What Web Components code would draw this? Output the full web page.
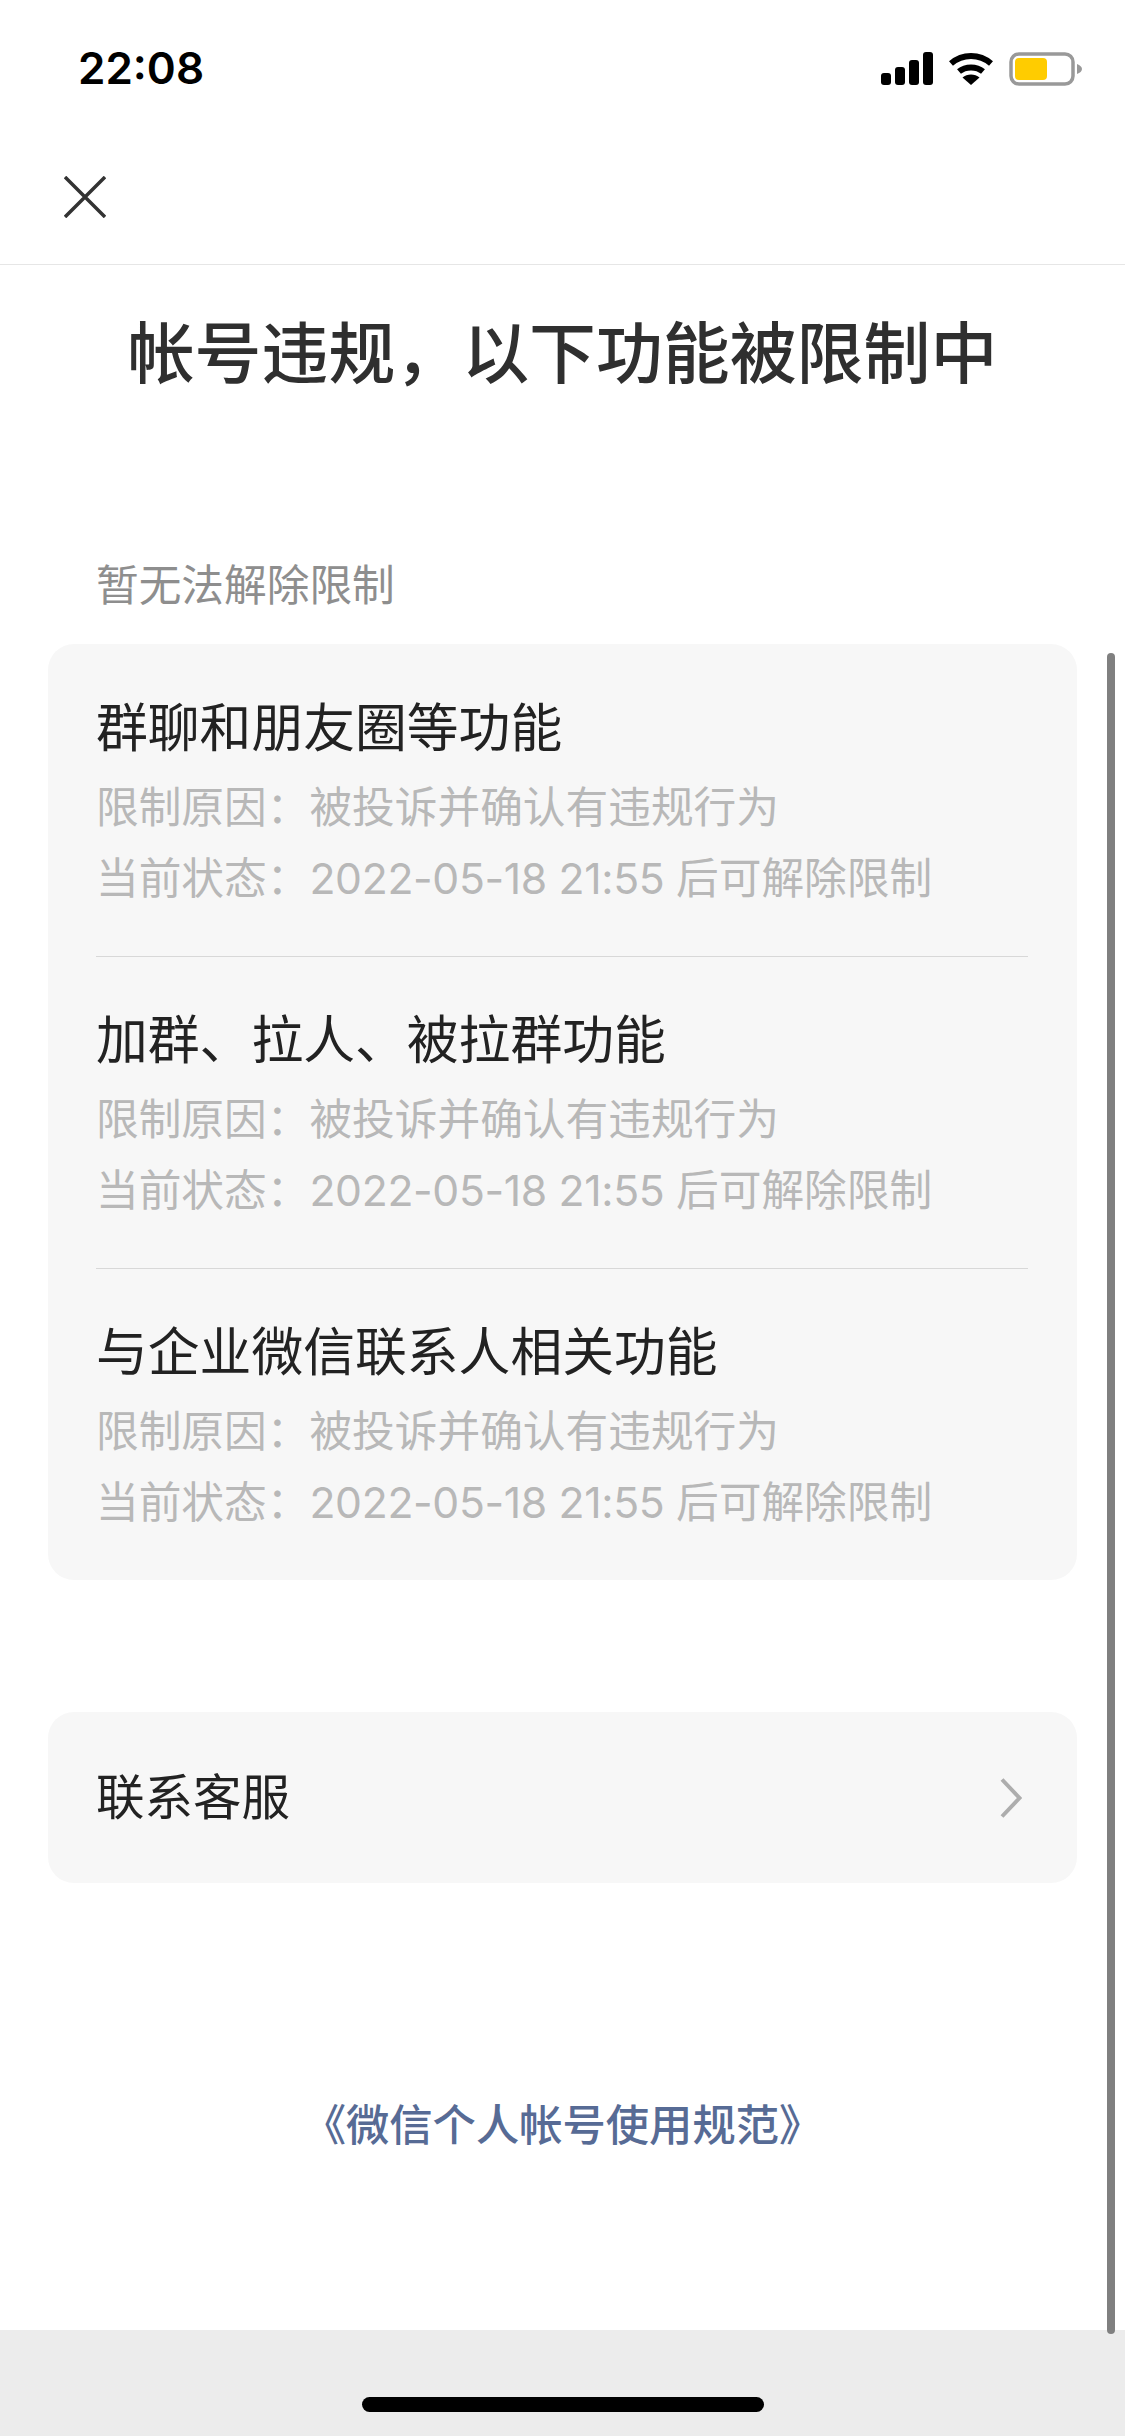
<!DOCTYPE html>
<html lang="zh-CN">
<head>
<meta charset="utf-8">
<title>帐号违规</title>
<style>
  html, body { margin: 0; padding: 0; background: #fff; }
  body {
    width: 1125px;
    height: 2436px;
    display: flex;
    flex-direction: column;
    position: relative;
    overflow: hidden;
    font-family: "Inter", "Noto Sans CJK SC", sans-serif;
  }
</style>
</head>
<body>
  <status-bar time="22:08"></status-bar>
  <nav-bar></nav-bar>
  <page-title>帐号违规，以下功能被限制中</page-title>
  <section-label>暂无法解除限制</section-label>
  <limit-card>
    <limit-item name="群聊和朋友圈等功能"></limit-item>
    <limit-item name="加群、拉人、被拉群功能"></limit-item>
    <limit-item name="与企业微信联系人相关功能" last></limit-item>
  </limit-card>
  <contact-row>联系客服</contact-row>
  <rule-link>《微信个人帐号使用规范》</rule-link>
  <home-bar></home-bar>
  <scroll-thumb></scroll-thumb>

<script>
class StatusBar extends HTMLElement {
  connectedCallback() {
    this.attachShadow({ mode: "open" });
    this.shadowRoot.innerHTML = `
      <style>
        :host {
          display: flex;
          justify-content: space-between;
          align-items: flex-start;
          height: 132px;
          padding: 46px 43px 0 78px;
          box-sizing: border-box;
        }
        .time {
          font: 600 44px/44px "Inter", sans-serif;
          color: #000;
        }
        .icons { display: flex; align-items: flex-start; gap: 15px; padding-top: 6px; }
        svg { display: block; }
      </style>
      <span class="time">${this.getAttribute("time")}</span>
      <div class="icons">
        <svg width="52" height="33" viewBox="0 0 52 33">
          <rect x="0" y="21" width="10" height="12" rx="3" fill="#000"/>
          <rect x="14" y="15" width="10" height="18" rx="3" fill="#000"/>
          <rect x="28" y="8" width="10" height="25" rx="3" fill="#000"/>
          <rect x="42" y="0" width="10" height="33" rx="3" fill="#000"/>
        </svg>
        <svg width="46" height="33" viewBox="0 0 46 33">
          <path d="M3 11.5C14.500 1.500 31.500 1.500 43 11.500" fill="none" stroke="#000" stroke-width="6"/>
          <path d="M11 19.500C17.500 14 28.500 14 35 19.500" fill="none" stroke="#000" stroke-width="6"/>
          <path d="M23 33L14.500 25.500C19 21.500 27 21.500 31.500 25.500Z" fill="#000"/>
        </svg>
        <svg width="73" height="34" viewBox="0 0 73 34">
          <rect x="2" y="2" width="62" height="30" rx="8" fill="none" stroke="#999" stroke-width="3.500"/>
          <rect x="6" y="6" width="32" height="22" rx="4" fill="#ffcc00"/>
          <path d="M68 12C71 13 73 15 73 17C73 19 71 21 68 22Z" fill="#999"/>
        </svg>
      </div>
    `;
  }
}
customElements.define("status-bar", StatusBar);

class NavBar extends HTMLElement {
  connectedCallback() {
    this.attachShadow({ mode: "open" });
    this.shadowRoot.innerHTML = `
      <style>
        :host {
          display: flex;
          align-items: flex-start;
          height: 133px;
          padding: 44px 0 0 64px;
          box-sizing: border-box;
          border-bottom: 1px solid #e6e6e6;
        }
        svg { display: block; }
      </style>
      <svg width="42" height="42" viewBox="0 0 42 42">
        <path d="M1 1L41 41M41 1L1 41" fill="none" stroke="#333" stroke-width="3.500"/>
      </svg>
    `;
  }
}
customElements.define("nav-bar", NavBar);

class PageTitle extends HTMLElement {
  connectedCallback() {
    this.attachShadow({ mode: "open" });
    this.shadowRoot.innerHTML = `
      <style>
        :host {
          display: block;
          padding-top: 39px;
          text-align: center;
          font: 500 66.900px/90px "Noto Sans CJK SC", sans-serif;
          color: #2f2f2f;
        }
      </style>
      <slot></slot>
    `;
  }
}
customElements.define("page-title", PageTitle);

class SectionLabel extends HTMLElement {
  connectedCallback() {
    this.attachShadow({ mode: "open" });
    this.shadowRoot.innerHTML = `
      <style>
        :host {
          display: block;
          margin: 158px 0 32px;
          padding-left: 96px;
          font: 400 42.7px/60px "Noto Sans CJK SC", sans-serif;
          color: #8e8e8e;
        }
      </style>
      <slot></slot>
    `;
  }
}
customElements.define("section-label", SectionLabel);

class LimitCard extends HTMLElement {
  connectedCallback() {
    this.attachShadow({ mode: "open" });
    this.shadowRoot.innerHTML = `
      <style>
        :host {
          display: block;
          margin: 0 48px;
          padding: 1px 49px 0 48px;
          background: #f7f7f7;
          border-radius: 26px;
        }
      </style>
      <slot></slot>
    `;
  }
}
customElements.define("limit-card", LimitCard);

class LimitItem extends HTMLElement {
  connectedCallback() {
    this.attachShadow({ mode: "open" });
    this.shadowRoot.innerHTML = `
      <style>
        :host {
          display: block;
          height: 312px;
          padding: 44px 0 0;
          box-sizing: border-box;
          border-bottom: 1px solid #d8d8d8;
        }
        :host([last]) { height: 311px; border-bottom: 0; }
        .name {
          font: 400 51.800px/72px "Noto Sans CJK SC", sans-serif;
          color: #222;
          margin-bottom: 11px;
        }
        .line {
          font: 400 42.7px/71px "Inter", "Noto Sans CJK SC", sans-serif;
          color: #b8b8b8;
        }
        .num { letter-spacing: -0.35px; }
      </style>
      <div class="name">${this.getAttribute("name")}</div>
      <div class="line">限制原因：被投诉并确认有违规行为</div>
      <div class="line">当前状态：<span class="num">2022-05-18 21:55 </span>后可解除限制</div>
    `;
  }
}
customElements.define("limit-item", LimitItem);

class ContactRow extends HTMLElement {
  connectedCallback() {
    this.attachShadow({ mode: "open" });
    this.shadowRoot.innerHTML = `
      <style>
        :host {
          display: flex;
          justify-content: space-between;
          align-items: center;
          height: 171px;
          margin: 132px 48px 0;
          padding: 0 55px 0 48px;
          box-sizing: border-box;
          background: #f7f7f7;
          border-radius: 26px;
          font: 400 48.500px/60px "Noto Sans CJK SC", sans-serif;
          color: #222;
        }
        .text { position: relative; top: -4px; }
        svg { display: block; }
      </style>
      <span class="text"><slot></slot></span>
      <svg width="22" height="40" viewBox="0 0 22 40">
        <path d="M2 1.500L19.500 20L2 38.500" fill="none" stroke="#adadad" stroke-width="4"/>
      </svg>
    `;
  }
}
customElements.define("contact-row", ContactRow);

class RuleLink extends HTMLElement {
  connectedCallback() {
    this.attachShadow({ mode: "open" });
    this.shadowRoot.innerHTML = `
      <style>
        :host {
          display: block;
          margin-top: 209px;
          text-align: center;
          font: 500 43.300px/60px "Noto Sans CJK SC", sans-serif;
          color: #576b95;
        }
      </style>
      <slot></slot>
    `;
  }
}
customElements.define("rule-link", RuleLink);

class HomeBar extends HTMLElement {
  connectedCallback() {
    this.attachShadow({ mode: "open" });
    this.shadowRoot.innerHTML = `
      <style>
        :host {
          display: flex;
          justify-content: center;
          margin-top: auto;
          height: 106px;
          padding-top: 67px;
          box-sizing: border-box;
          background: #ececec;
        }
        .pill { width: 402px; height: 15px; border-radius: 8px; background: #000; }
      </style>
      <div class="pill"></div>
    `;
  }
}
customElements.define("home-bar", HomeBar);

// overlay thumb, sits on top of the content
class ScrollThumb extends HTMLElement {
  connectedCallback() {
    this.attachShadow({ mode: "open" });
    this.shadowRoot.innerHTML = `
      <style>
        :host {
          position: absolute;
          left: 1107px;
          top: 653px;
          width: 8px;
          height: 1681px;
          border-radius: 4px;
          background: #808080;
        }
      </style>
    `;
  }
}
customElements.define("scroll-thumb", ScrollThumb);
</script>
</body>
</html>
